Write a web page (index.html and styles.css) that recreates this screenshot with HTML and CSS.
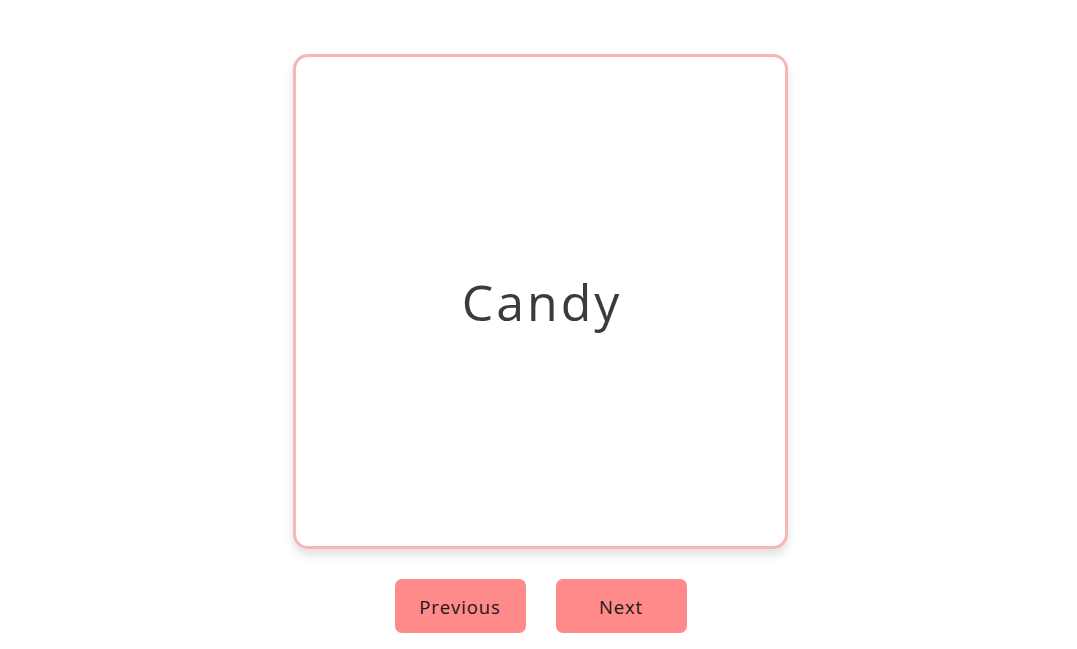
FILE: index.html
```html
<!DOCTYPE html>
<html>
<head>
<meta charset="utf-8">
<link rel="stylesheet" href="styles.css">
</head>
<body>
<main class="app">
  <div class="card">
    <span class="word">Candy</span>
  </div>
  <div class="controls">
    <button class="btn">Previous</button>
    <button class="btn">Next</button>
  </div>
</main>
</body>
</html>
```
FILE: styles.css
```css
html, body {
  margin: 0;
  padding: 0;
  background: #ffffff;
}
body {
  font-family: "Open Sans", "Liberation Sans", sans-serif;
}
.app {
  display: flex;
  flex-direction: column;
  align-items: center;
  padding-top: 54px;
  padding-left: 4px;
}
.card {
  width: 489px;
  height: 489px;
  border: 3px solid #f8b5b5;
  border-radius: 15px;
  box-shadow: 0 6px 10px rgba(0, 0, 0, 0.12);
  display: flex;
  align-items: center;
  justify-content: center;
  background: #fff;
}
.word {
  font-size: 50px;
  color: #3b3b3b;
  font-weight: 400;
  letter-spacing: 3px;
  margin-right: -3px;
}
.controls {
  display: flex;
  gap: 30px;
  margin-top: 30px;
}
.btn {
  width: 131px;
  height: 54px;
  border: none;
  border-radius: 7px;
  background: #ff8a8a;
  color: #221616;
  font-family: "Open Sans", "Liberation Sans", sans-serif;
  font-size: 18.5px;
  letter-spacing: 0.9px;
  padding: 0;
}
```
